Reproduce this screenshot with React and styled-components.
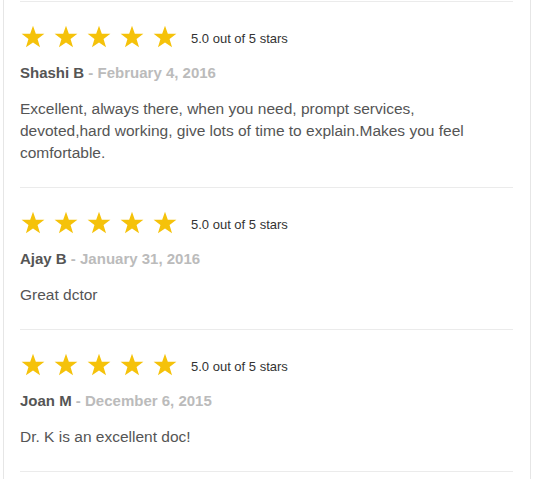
import { createGlobalStyle, styled } from "styled-components"

const GlobalStyle = createGlobalStyle`
body {
  margin: 0;
  background: #fff;
  font-family: "Liberation Sans", Arial, sans-serif;
}
`

const Panel = styled.div`
margin: 0 5px 0 3px;
padding: 1px 17px 20px 16px;
min-height: 479px;
box-sizing: border-box;
border-left: 1px solid #e6e6e6;
border-right: 1px solid #e6e6e6;
`
const Review = styled.div`
border-top: 1px solid #ebebeb;
padding: 19px 0 23px 0;
&:last-child {
  border-bottom: 1px solid #ebebeb;
}
`
const RatingRow = styled.div`
display: flex;
align-items: center;
height: 32px;
`
const Stars = styled.div`
display: flex;
gap: 7px;
margin-right: 13px;
`
const RatingText = styled.span`
font-size: 13px;
color: #333;
padding-top: 3px;
`
const Meta = styled.div`
margin-top: 10px;
font-size: 15px;
line-height: 20px;
font-weight: bold;
color: #555;
`
const DateText = styled.span`
color: #bbb;
`
const Body = styled.p`
margin: 15px 0 0 0;
max-width: 460px;
font-size: 15.5px;
line-height: 22px;
color: #555;
`

const Star = () => (
  <svg width="26" height="26" viewBox="0 0 24 24">
    <polygon
      points="12,1.5 14.6,8.9 22.5,9.1 16.2,13.9 18.5,21.5 12,17 5.5,21.5 7.8,13.9 1.5,9.1 9.4,8.9"
      fill="#f5c20a"
    />
  </svg>
)

const reviews = [
  {
    name: "Shashi B",
    date: "February 4, 2016",
    text: "Excellent, always there, when you need, prompt services, devoted,hard working, give lots of time to explain.Makes you feel comfortable.",
  },
  { name: "Ajay B", date: "January 31, 2016", text: "Great dctor" },
  { name: "Joan M", date: "December 6, 2015", text: "Dr. K is an excellent doc!" },
]

const App = () => {
  return (
    <>
      <GlobalStyle />
      <Panel>
        {reviews.map((r) => (
          <Review key={r.name}>
            <RatingRow>
              <Stars>
                {[0, 1, 2, 3, 4].map((i) => (
                  <Star key={i} />
                ))}
              </Stars>
              <RatingText>5.0 out of 5 stars</RatingText>
            </RatingRow>
            <Meta>
              {r.name} <DateText>- {r.date}</DateText>
            </Meta>
            <Body>{r.text}</Body>
          </Review>
        ))}
      </Panel>
    </>
  )
}

export default App
